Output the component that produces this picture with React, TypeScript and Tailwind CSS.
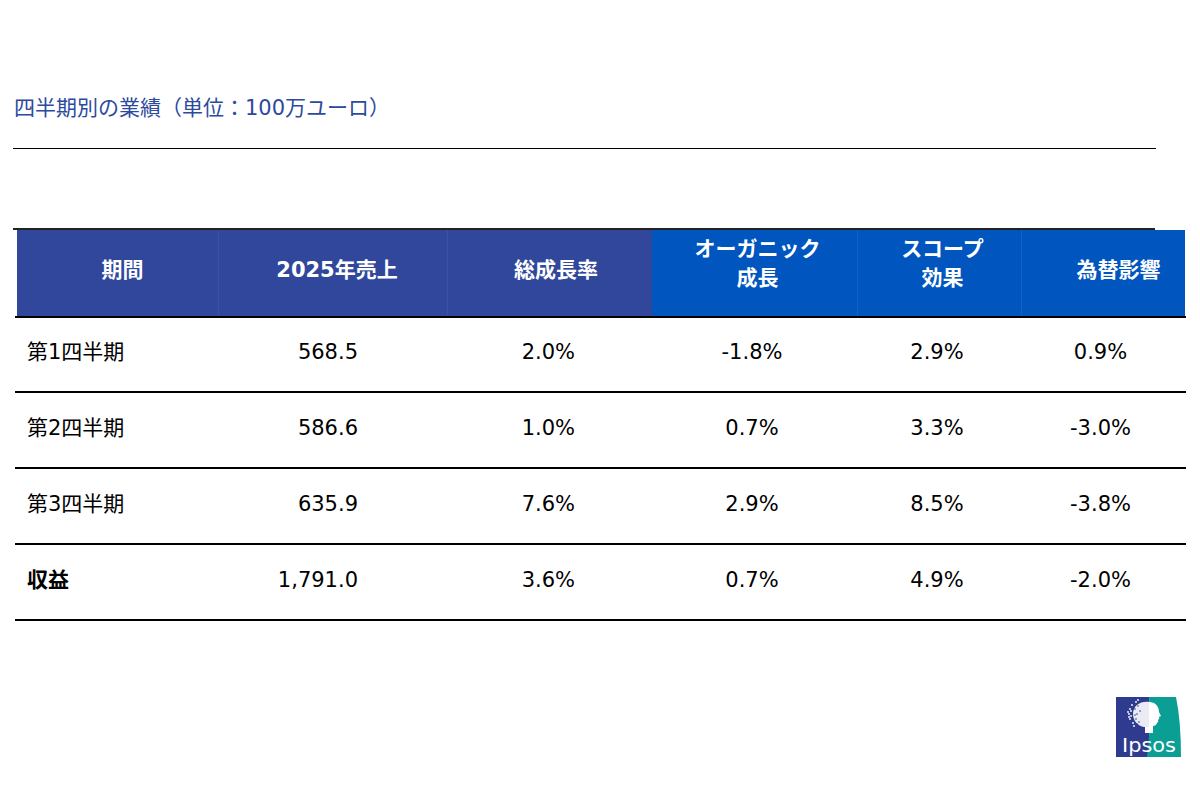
const rows = [
  { label: "第1四半期", values: ["568.5", "2.0%", "-1.8%", "2.9%", "0.9%"] },
  { label: "第2四半期", values: ["586.6", "1.0%", "0.7%", "3.3%", "-3.0%"] },
  { label: "第3四半期", values: ["635.9", "7.6%", "2.9%", "8.5%", "-3.8%"] },
  { label: "収益", values: ["1,791.0", "3.6%", "0.7%", "4.9%", "-2.0%"], bold: true },
];

const cols = "grid grid-cols-[202px_229px_204px_206px_164px_163px]";

// per-column alignment of the data cells (sales column is right-aligned in the source)
const cellClass = [
  "text-right pr-[90px]",
  "text-right pr-[77px]",
  "text-center pr-[6px]",
  "text-center pr-[6px]",
  "text-center pr-[6px]",
];

function IpsosLogo() {
  return (
    <svg width="65" height="60" viewBox="0 0 65 60">
      <rect x="0" y="0" width="33" height="60" fill="#2e3b8f" />
      <path d="M33 0 H60 Q65 24 65 60 H31 Q35 30 33 0 Z" fill="#0a9e94" />
      {/* tree-like crown, dotted, on the blue half */}
      <path d="M33 5 C24 4 17 9 17 17 C17 24 22 29 28 30 L33 30 Z" fill="#ffffff" opacity="0.9" />
      {[
        [14, 12], [13, 17], [14, 22], [16, 8], [17, 26], [20, 5], [12, 15], [15, 19],
        [18, 29], [22, 3], [15, 14], [13, 20],
      ].map(([x, y], i) => (
        <circle key={i} cx={x} cy={y} r="0.9" fill="#ffffff" />
      ))}
      {[
        [19, 12], [21, 17], [20, 22], [22, 9], [23, 25], [19, 18], [24, 14], [21, 27],
      ].map(([x, y], i) => (
        <circle key={"b" + i} cx={x} cy={y} r="0.8" fill="#2e3b8f" />
      ))}
      {/* face profile on the teal half */}
      <path
        d="M33 5 C39 5 43 9 43 15 L45 19 L43 20 Q44 22 42 23 Q43 25 41 26 Q40 29 37 29 L37 36 L29 36 L29 30 L33 30 Z"
        fill="#ffffff"
      />
      <text
        x="6"
        y="55"
        fill="#ffffff"
        fontFamily="'DejaVu Sans', sans-serif"
        fontSize="19"
        fontWeight="400"
        textLength="54"
        lengthAdjust="spacingAndGlyphs"
      >
        Ipsos
      </text>
    </svg>
  );
}

export default function App() {
  return (
    <div className="w-[1200px] h-[800px] bg-white font-['DejaVu_Sans','Noto_Sans_CJK_JP',sans-serif] text-black relative">
      <div className="pl-[14px] pt-[95px] text-[21px] leading-[26px] text-[#2d4a9e]">
        四半期別の業績（単位：100万ユーロ）
      </div>
      <div className="ml-[13px] mt-[27px] w-[1143px] h-px bg-black" />
      <div className="ml-[13px] mt-[79px] w-[1142px] h-[2px] bg-[#222]" />

      <div className="ml-[15px] w-[1171px]">
        <div className={`${cols} ml-[2px] w-[1168px] h-[86px] text-white font-bold text-[21px] leading-[29px]`}>
          <div className="bg-[#30479b] border-r border-[#3a52a3] flex items-center justify-center pl-[10px] pb-[6px]">期間</div>
          <div className="bg-[#30479b] border-r border-[#3a52a3] flex items-center justify-center pl-[8px] pb-[6px]">2025年売上</div>
          <div className="bg-[#30479b] flex items-center justify-center pl-[12px] pb-[6px]">総成長率</div>
          <div className="bg-[#0055be] border-r border-[#1460c3] flex items-center justify-center text-center pl-[6px] pb-[18px]">
            オーガニック<br />成長
          </div>
          <div className="bg-[#0055be] border-r border-[#1460c3] flex items-center justify-center text-center pl-[6px] pb-[18px]">
            スコープ<br />効果
          </div>
          <div className="bg-[#0055be] flex items-center justify-center pl-[30px] pb-[6px]">為替影響</div>
        </div>
        <div className="h-[2px] bg-black" />

        {rows.map((r) => (
          <div key={r.label}>
            <div className={`${cols} ml-[2px] w-[1168px] h-[73px] text-[21px] items-center pb-[4px]`}>
              <div className={`pl-[10px] ${r.bold ? "font-bold" : ""}`}>{r.label}</div>
              {r.values.map((v, i) => (
                <div key={i} className={cellClass[i]}>
                  {v}
                </div>
              ))}
            </div>
            <div className="h-[2px] bg-black mb-px" />
          </div>
        ))}
      </div>

      <div className="absolute left-[1116px] top-[697px]">
        <IpsosLogo />
      </div>
    </div>
  );
}
